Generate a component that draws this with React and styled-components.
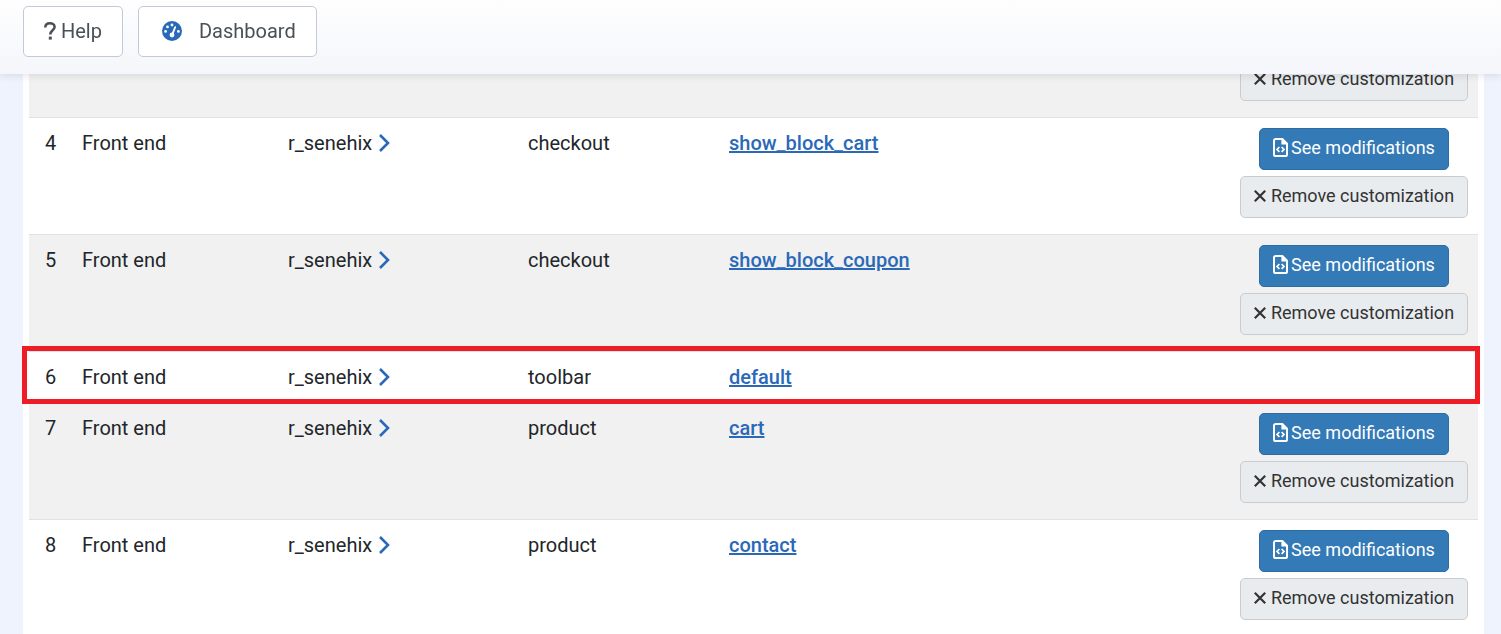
import React from "react";
import styled, { createGlobalStyle } from "styled-components";

const GlobalStyle = createGlobalStyle`
  * {
    box-sizing: border-box;
  }
  body {
    margin: 0;
    background: #eff3fd;
    color: #22262a;
    font-family: Roboto, "Liberation Sans", sans-serif;
    font-size: 20px;
    line-height: 30px;
  }
`;

const Toolbar = styled.header`
  position: fixed;
  top: 0;
  left: 0;
  right: 0;
  z-index: 2;
  display: flex;
  gap: 15px;
  height: 74px;
  padding: 6px 23px 17px;
  background: linear-gradient(#fefefe, #f4f6fb);
  box-shadow: 0 2px 8px rgba(0, 0, 0, 0.1);
`;

const ToolbarButton = styled.button`
  display: inline-flex;
  align-items: center;
  gap: ${(props) => (props.$wide ? 17 : 5)}px;
  padding: 0 20px 2px ${(props) => (props.$wide ? 23 : 20)}px;
  border: 1px solid #c3c9d8;
  border-radius: 5px;
  background: #fff;
  color: #495057;
  font: inherit;
  cursor: pointer;
`;

const Page = styled.div`
  height: 100vh;
  padding: 0 17px 0 23px;
  overflow: hidden;
`;

const Panel = styled.main`
  min-height: 100%;
  padding: 0 6px;
  background: #fff;
`;

const Table = styled.table`
  width: 100%;
  table-layout: fixed;
  border-collapse: separate;
  border-spacing: 0;
`;

const Col = styled.col`
  width: ${(props) => props.$width || "auto"};
`;

const Cell = styled.td`
  padding: 10px;
  border-top: 1px solid #dee2e6;
  vertical-align: top;
  text-align: ${(props) => props.$align || "left"};
`;

const Row = styled.tr`
  height: ${(props) => (props.$short ? 51 : 117)}px;
  &:nth-child(odd) {
    background: #f1f1f1;
  }
`;

const MarkedRow = styled(Row)`
  position: relative;
  z-index: 1;
  td:first-child::after {
    content: "";
    position: absolute;
    inset: -5px -2px -2px -7px;
    border: 5px solid #ee1c25;
    pointer-events: none;
  }
`;

const ActionCell = styled(Cell)`
  padding-bottom: 16px;
  vertical-align: bottom;
`;

const Actions = styled.div`
  display: flex;
  flex-direction: column;
  align-items: center;
  gap: 6px;
`;

const Template = styled.span`
  display: inline-flex;
  align-items: center;
  gap: 7px;
`;

const IconLink = styled.a`
  display: inline-flex;
  color: #2a69b8;
`;

const FileLink = styled.a`
  color: #2a69b8;
  font-weight: 500;
  text-decoration: underline;
`;

const ActionButton = styled.button`
  display: inline-flex;
  align-items: center;
  justify-content: center;
  gap: ${(props) => (props.$primary ? 3 : 5)}px;
  height: 42px;
  padding: 0 13px 3px;
  border: 1px solid ${(props) => (props.$primary ? "#2e6da4" : "#c9cccf")};
  border-radius: 5px;
  background: ${(props) => (props.$primary ? "#337ab7" : "#e8ecef")};
  color: ${(props) => (props.$primary ? "#fff" : "#333")};
  font: inherit;
  font-size: 18px;
  white-space: nowrap;
  cursor: pointer;
`;

const Icon = styled.svg`
  flex: none;
  fill: none;
  stroke: currentColor;
`;

const QuestionIcon = () => (
  <Icon width="12" height="18" viewBox="0 0 12 18" strokeWidth="2.5">
    <path d="M1.3 5.6C1.3 2.8 3.2 1.3 5.9 1.3S10.6 2.8 10.6 5C10.6 8.2 6.3 8.4 6.3 12.4" />
    <path d="M6.3 14.6V17.6" strokeWidth="3" />
  </Icon>
);

const GaugeIcon = () => (
  <Icon width="20" height="20" viewBox="0 0 20 20">
    <circle cx="10" cy="10" r="10" fill="#2a69b8" stroke="none" />
    <g fill="#fff" stroke="none">
      <circle cx="3.6" cy="10.4" r="1.4" />
      <circle cx="5.5" cy="5.9" r="1.4" />
      <circle cx="10" cy="4" r="1.4" />
      <circle cx="16.4" cy="10.4" r="1.4" />
      <circle cx="10" cy="14" r="2.4" />
    </g>
    <path d="M10.2 13.6L13.2 6.2" stroke="#fff" strokeWidth="1.8" strokeLinecap="round" />
  </Icon>
);

const ChevronIcon = () => (
  <Icon width="12" height="18" viewBox="0 0 12 18" strokeWidth="2.6">
    <path d="M1 1L9 9L1 17" />
  </Icon>
);

const CloseIcon = () => (
  <Icon width="12" height="12" viewBox="0 0 12 12" strokeWidth="2.2">
    <path d="M0.8 0.8L11.2 11.2M11.2 0.8L0.8 11.2" />
  </Icon>
);

const FileCodeIcon = () => (
  <Icon width="15" height="19" viewBox="0 0 15 19" strokeWidth="2">
    <path d="M2.6 1H9.4L14 5.6V16.4A1.6 1.6 0 0 1 12.4 18H2.6A1.6 1.6 0 0 1 1 16.4V2.6A1.6 1.6 0 0 1 2.6 1Z" />
    <path d="M9 1V6H14Z" fill="currentColor" strokeWidth="1.2" />
    <path d="M6.4 9L4 11.4L6.4 13.8M8.6 9L11 11.4L8.6 13.8" strokeWidth="1.7" />
  </Icon>
);

const rows = [
  { onlyRemove: true },
  { id: 4, view: "checkout", file: "show_block_cart", modified: true },
  { id: 5, view: "checkout", file: "show_block_coupon", modified: true },
  { id: 6, view: "toolbar", file: "default", marked: true },
  { id: 7, view: "product", file: "cart", modified: true },
  { id: 8, view: "product", file: "contact", modified: true },
];

const ViewRow = ({ row }) => {
  const Wrapper = row.marked ? MarkedRow : Row;

  return (
    <Wrapper $short={row.marked}>
      <Cell $align="center">{row.id}</Cell>
      <Cell>{row.id && "Front end"}</Cell>
      <Cell>
        {row.id && (
          <Template>
            r_senehix
            <IconLink href="#template" aria-label="Open template">
              <ChevronIcon />
            </IconLink>
          </Template>
        )}
      </Cell>
      <Cell>{row.view}</Cell>
      <Cell>{row.file && <FileLink href={"#" + row.file}>{row.file}</FileLink>}</Cell>
      <ActionCell>
        <Actions>
          {row.modified && (
            <ActionButton type="button" $primary>
              <FileCodeIcon />
              See modifications
            </ActionButton>
          )}
          {(row.modified || row.onlyRemove) && (
            <ActionButton type="button">
              <CloseIcon />
              Remove customization
            </ActionButton>
          )}
        </Actions>
      </ActionCell>
    </Wrapper>
  );
};

const App = () => {
  return (
    <>
      <GlobalStyle />
      <Toolbar>
        <ToolbarButton type="button">
          <QuestionIcon />
          Help
        </ToolbarButton>
        <ToolbarButton type="button" $wide>
          <GaugeIcon />
          Dashboard
        </ToolbarButton>
      </Toolbar>
      <Page>
        <Panel>
          <Table>
            <colgroup>
              <Col $width="43px" />
              <Col $width="206px" />
              <Col $width="240px" />
              <Col $width="201px" />
              <Col />
              <Col $width="248px" />
            </colgroup>
            <tbody>
              {rows.map((row, index) => (
                <ViewRow key={index} row={row} />
              ))}
            </tbody>
          </Table>
        </Panel>
      </Page>
    </>
  );
};

export default App;
